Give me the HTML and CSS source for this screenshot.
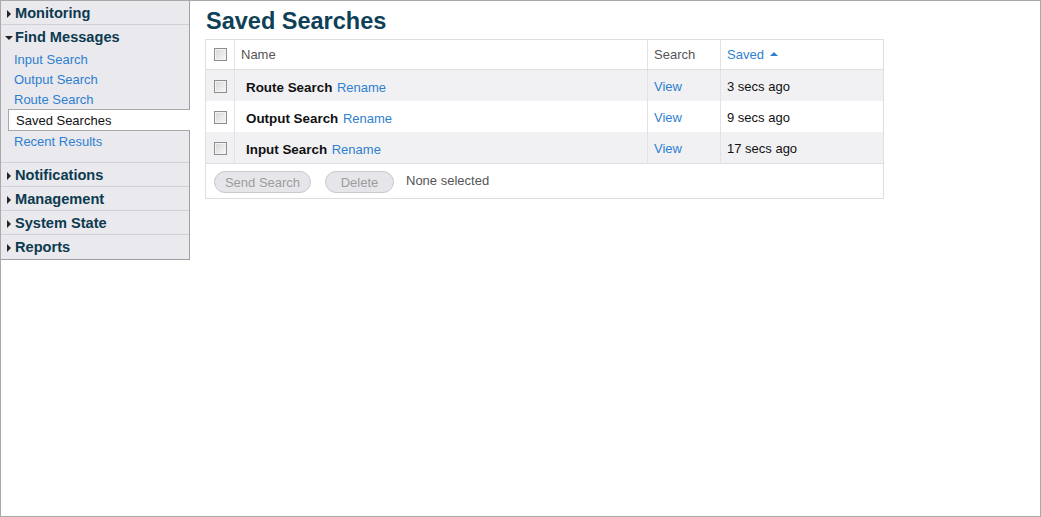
FILE: index.html
```html
<!DOCTYPE html>
<html>
<head>
<meta charset="utf-8">
<title>Saved Searches</title>
<link rel="stylesheet" href="styles.css">
</head>
<body>
<div class="page">
  <nav class="nav">
    <div class="sec"><div class="head"><span class="tri-r"></span>Monitoring</div></div>
    <div class="sec open">
      <div class="head head-open"><span class="tri-d"></span>Find Messages</div>
      <ul class="sub">
        <li><a class="lnk">Input Search</a></li>
        <li><a class="lnk">Output Search</a></li>
        <li><a class="lnk">Route Search</a></li>
        <li class="active">Saved Searches</li>
        <li><a class="lnk">Recent Results</a></li>
      </ul>
    </div>
    <div class="sec"><div class="head"><span class="tri-r"></span>Notifications</div></div>
    <div class="sec"><div class="head"><span class="tri-r"></span>Management</div></div>
    <div class="sec"><div class="head"><span class="tri-r"></span>System State</div></div>
    <div class="sec last"><div class="head"><span class="tri-r"></span>Reports</div></div>
  </nav>
  <main class="main">
    <h1 class="title">Saved Searches</h1>
    <div class="tbl">
      <div class="row hdr">
        <div class="c cb"><span class="box"></span></div>
        <div class="c name">Name</div>
        <div class="c srch">Search</div>
        <div class="c saved"><span class="sortlnk">Saved</span><span class="tri-u"></span></div>
      </div>
      <div class="row alt">
        <div class="c cb"><span class="box"></span></div>
        <div class="c name"><b>Route Search</b> <a class="lnk">Rename</a></div>
        <div class="c srch"><a class="lnk">View</a></div>
        <div class="c saved">3 secs ago</div>
      </div>
      <div class="row">
        <div class="c cb"><span class="box"></span></div>
        <div class="c name"><b>Output Search</b> <a class="lnk">Rename</a></div>
        <div class="c srch"><a class="lnk">View</a></div>
        <div class="c saved">9 secs ago</div>
      </div>
      <div class="row alt">
        <div class="c cb"><span class="box"></span></div>
        <div class="c name"><b>Input Search</b> <a class="lnk">Rename</a></div>
        <div class="c srch"><a class="lnk">View</a></div>
        <div class="c saved">17 secs ago</div>
      </div>
      <div class="foot">
        <button class="btn btn-send">Send Search</button>
        <button class="btn btn-del">Delete</button>
        <span class="status">None selected</span>
      </div>
    </div>
  </main>
</div>
</body>
</html>
```

FILE: styles.css
```css
html, body {
  margin: 0;
  padding: 0;
  height: 100%;
}
body {
  font-family: "Liberation Sans", Arial, sans-serif;
  font-size: 13px;
  color: #111;
  background: #fff;
}
.page {
  box-sizing: border-box;
  height: 100vh;
  border: 1px solid #a9a9a9;
  display: flex;
  align-items: flex-start;
}
.nav {
  width: 188px;
  background: #e9e9ee;
  border-right: 1px solid #a0a0a0;
  border-bottom: 1px solid #a0a0a0;
}
.sec {
  border-bottom: 1px solid #d0d0d8;
}
.sec.last {
  border-bottom: none;
}
.head {
  box-sizing: border-box;
  height: 23px;
  padding-top: 1px;
  line-height: 23px;
  font-size: 14.6px;
  font-weight: bold;
  color: #0d3a4e;
  padding-left: 14px;
  position: relative;
}
.head-open, .sec.last .head {
  height: 24px;
}
.tri-r {
  position: absolute;
  left: 6px;
  top: 9px;
  width: 0;
  height: 0;
  border-left: 4px solid #222;
  border-top: 4px solid transparent;
  border-bottom: 4px solid transparent;
}
.tri-d {
  position: absolute;
  left: 4px;
  top: 11px;
  width: 0;
  height: 0;
  border-top: 4px solid #222;
  border-left: 4px solid transparent;
  border-right: 4px solid transparent;
}
.sub {
  list-style: none;
  margin: 0;
  padding: 0 0 11px 0;
}
.sub li {
  box-sizing: border-box;
  height: 20px;
  line-height: 20px;
  padding-top: 1px;
  padding-left: 13px;
}
.sub li.active {
  box-sizing: content-box;
  height: 20px;
  padding-top: 0;
  line-height: 21px;
  background: #fff;
  border: 1px solid #a9a9a9;
  border-right: none;
  margin-left: 7px;
  margin-right: -1px;
  padding-left: 7px;
  color: #111;
}
.lnk {
  color: #2f7fd0;
  text-decoration: none;
  cursor: pointer;
}
.main {
  padding-left: 15px;
  flex: 1;
}
.title {
  margin: 6px 0 4px 1px;
  font-size: 23.5px;
  line-height: 28px;
  font-weight: bold;
  color: #0e4157;
}
.tbl {
  width: 677px;
  border: 1px solid #dedee2;
}
.row {
  display: grid;
  grid-template-columns: 28px 413px 73px 163px;
  height: 31px;
}
.row.hdr {
  height: 29px;
  border-bottom: 1px solid #dedee2;
}
.row.alt {
  background: #f1f1f4;
}
.c {
  box-sizing: border-box;
  border-left: 1px solid #e2e2e6;
  line-height: 29px;
  padding-top: 2px;
  white-space: nowrap;
}
.hdr .c {
  padding-top: 0;
  color: #555;
}
.c.cb {
  border-left: none;
  display: flex;
  align-items: center;
  justify-content: center;
  padding-top: 0;
}
.c.name {
  padding-left: 11px;
  padding-top: 3px;
}
.c.name b {
  font-size: 13.4px;
  margin-right: 1px;
}
.hdr .c.name {
  padding-left: 6px;
  padding-top: 0;
}
.c.srch {
  padding-left: 6px;
}
.c.saved {
  padding-left: 6px;
}
.sortlnk {
  color: #2f7fd0;
}
.tri-u {
  display: inline-block;
  width: 0;
  height: 0;
  margin-left: 6px;
  vertical-align: 3px;
  border-bottom: 4px solid #2f7fd0;
  border-left: 4px solid transparent;
  border-right: 4px solid transparent;
}
.box {
  box-sizing: border-box;
  width: 13px;
  height: 13px;
  border: 1px solid #8e8e8e;
  background: linear-gradient(135deg, #d6d6d6 0%, #eeeeee 70%, #f7f7f7 100%);
  box-shadow: inset 0 0 0 1px #f3f3f3;
}
.foot {
  border-top: 1px solid #dedee2;
  height: 35px;
  display: flex;
  align-items: flex-start;
  padding: 7px 0 0 8px;
  box-sizing: border-box;
}
.btn {
  box-sizing: border-box;
  height: 22px;
  border: 1px solid #c9c9cd;
  border-radius: 11px;
  background: #e6e6ea;
  color: #9c9c9c;
  font-family: "Liberation Sans", Arial, sans-serif;
  font-size: 13px;
  line-height: 20px;
  padding: 1px 0 0 0;
  margin: 0;
}
.btn-send {
  width: 97px;
}
.btn-del {
  width: 69px;
  margin-left: 14px;
}
.status {
  margin-left: 12px;
  margin-top: 1px;
  color: #555;
  line-height: 18px;
}
```
